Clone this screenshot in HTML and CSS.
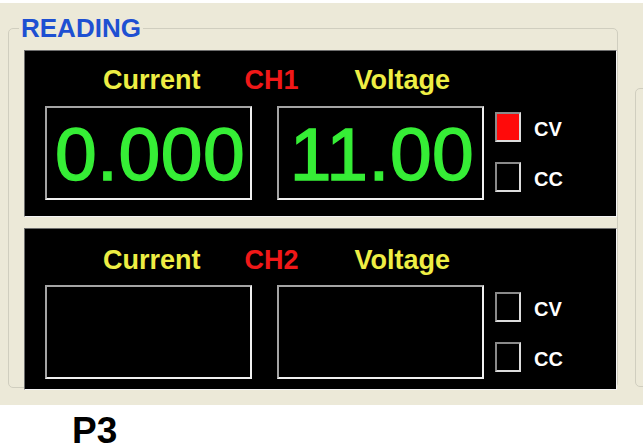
FILE: index.html
```html
<!DOCTYPE html>
<html>
<head>
<meta charset="utf-8">
<link rel="stylesheet" href="styles.css">
</head>
<body>
<div class="window">
  <fieldset class="group">
    <legend class="group-title">READING</legend>
    <div class="panel panel-1">
      <div class="labels">
        <span class="lbl lbl-current">Current</span>
        <span class="lbl lbl-ch">CH1</span>
        <span class="lbl lbl-voltage">Voltage</span>
      </div>
      <div class="row">
        <div class="display">0.000</div>
        <div class="display display-2">11.00</div>
        <div class="modes">
          <div class="mode"><span class="check on"></span><span class="mode-txt">CV</span></div>
          <div class="mode"><span class="check"></span><span class="mode-txt">CC</span></div>
        </div>
      </div>
    </div>
    <div class="panel panel-2">
      <div class="labels">
        <span class="lbl lbl-current">Current</span>
        <span class="lbl lbl-ch">CH2</span>
        <span class="lbl lbl-voltage">Voltage</span>
      </div>
      <div class="row">
        <div class="display"></div>
        <div class="display display-2"></div>
        <div class="modes">
          <div class="mode"><span class="check"></span><span class="mode-txt">CV</span></div>
          <div class="mode"><span class="check"></span><span class="mode-txt">CC</span></div>
        </div>
      </div>
    </div>
  </fieldset>
  <div class="group-stub"></div>
</div>
<div class="caption">P3</div>
</body>
</html>
```

FILE: styles.css
```css
html, body {
  margin: 0;
  padding: 0;
}
body {
  width: 643px;
  height: 448px;
  overflow: hidden;
  background: #ffffff;
  font-family: "Liberation Sans", Arial, sans-serif;
}
.window {
  margin-top: 3px;
  height: 402px;
  background: #ece9d8;
  display: flex;
  align-items: flex-start;
  padding-left: 8px;
  gap: 17px;
  overflow: hidden;
  box-sizing: border-box;
}
.group {
  flex: none;
  box-sizing: border-box;
  width: 610px;
  height: 375px;
  margin: 10px 0 0 0;
  padding: 7px 0 0 15px;
  border: 1px solid #d0cebf;
  border-radius: 5px;
  min-inline-size: 0;
}
.group-title {
  margin-left: -5px;
  padding: 0 2px;
  font-size: 26px;
  line-height: 30px;
  font-weight: bold;
  color: #1e50d2;
}
.group-stub {
  flex: none;
  width: 40px;
  height: 299px;
  margin-top: 85px;
  border: 1px solid #d0cebf;
  border-radius: 5px;
  box-sizing: border-box;
}
.panel {
  box-sizing: border-box;
  width: 593px;
  background: #000;
  border: 1px solid;
  border-color: #6e6e6e #f4f4f4 #f4f4f4 #6e6e6e;
}
.panel-1 {
  height: 167px;
  padding-top: 14px;
}
.panel-2 {
  height: 162px;
  margin-top: 11px;
  padding-top: 16px;
}
.labels {
  display: flex;
  padding-left: 78px;
  height: 30px;
  line-height: 30px;
  font-size: 27px;
  font-weight: bold;
}
.lbl-current, .lbl-voltage {
  color: #eeee44;
}
.lbl-ch {
  color: #f01818;
  margin-left: 44px;
}
.lbl-voltage {
  margin-left: 56px;
}
.row {
  display: flex;
  align-items: flex-start;
  padding-left: 20px;
  margin-top: 11px;
}
.panel-2 .row {
  margin-top: 10px;
}
.display {
  box-sizing: border-box;
  width: 207px;
  height: 94px;
  border: 2px solid;
  border-color: #a4a4a4 #f0f0f0 #f0f0f0 #a4a4a4;
  display: flex;
  align-items: center;
  justify-content: center;
  padding-top: 3px;
  padding-left: 3px;
  font-size: 75px;
  line-height: 1;
  letter-spacing: 0.5px;
  color: #36ee36;
  -webkit-text-stroke: 1.4px #36ee36;
}
.display-2 {
  margin-left: 25px;
}
.modes {
  margin-left: 11px;
  padding-top: 6px;
  display: flex;
  flex-direction: column;
  gap: 20px;
}
.panel-2 .modes {
  padding-top: 7px;
}
.mode {
  display: flex;
  align-items: center;
  gap: 13px;
}
.check {
  box-sizing: border-box;
  width: 26px;
  height: 30px;
  border: 2px solid;
  border-color: #8a8a8a #dcdcdc #dcdcdc #8a8a8a;
  background: #000;
}
.check.on {
  background: #ff0a0a;
}
.mode-txt {
  color: #ffffff;
  font-size: 20px;
  font-weight: bold;
  padding-top: 4px;
}
.caption {
  margin-top: 10px;
  padding-left: 72px;
  font-size: 37px;
  line-height: 32px;
  font-weight: bold;
  color: #000;
}
```
